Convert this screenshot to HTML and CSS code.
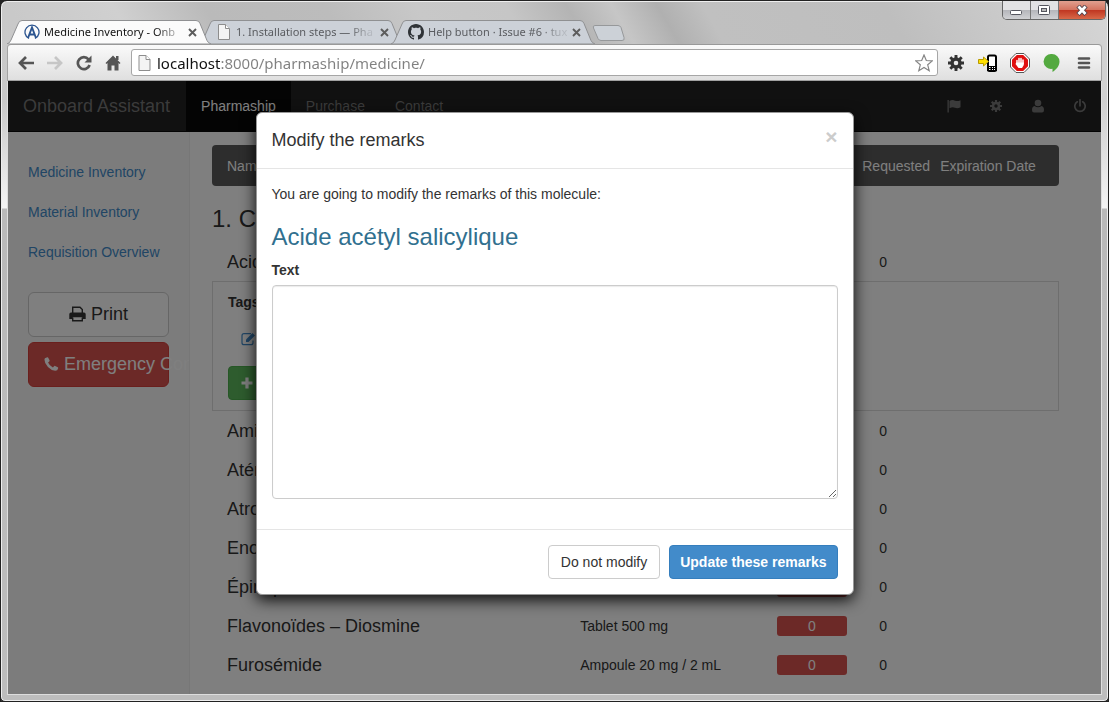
FILE: index.html
```html
<!DOCTYPE html>
<html lang="en">
<head>
<meta charset="utf-8">
<title>Medicine Inventory - Onboard Assistant</title>
<link rel="stylesheet" href="styles.css">
</head>
<body>
<svg class="sprite" aria-hidden="true">
  <symbol id="gear" viewBox="0 0 16 16">
    <circle cx="8" cy="8" r="4" fill="none" stroke="currentColor" stroke-width="3.4"/>
    <path stroke="currentColor" stroke-width="2.9" d="M8 0v3M8 13v3M0 8h3M13 8h3M2.3 2.3l2.2 2.2M11.5 11.5l2.2 2.2M13.7 2.3l-2.2 2.2M4.5 11.5l-2.2 2.2"/>
  </symbol>
  <symbol id="sheet" viewBox="0 0 13 16">
    <path d="M1 .5h7l4 4v11H1z" fill="#f4f4f4" stroke="#8d8d8d"/><path d="M8 .5v4h4" fill="#fff" stroke="#8d8d8d"/>
  </symbol>
  <symbol id="tab-shape" viewBox="0 0 204 24" preserveAspectRatio="none">
    <path d="M0 24q3-1 4-4l7-16q1-3.500 4-3.500h174q3 0 4 3l7 17q1 2.500 4 3.500z" fill="currentColor" stroke="#8f9092" vector-effect="non-scaling-stroke"/>
  </symbol>
  <symbol id="cross" viewBox="0 0 9 9"><path d="M1 1l7 7M8 1l-7 7" stroke="currentColor" stroke-width="1.9"/></symbol>
</svg>

<div class="window">
  <header class="titlebar">
    <div class="tabs">
      <div class="tab active">
        <svg class="tab-bg"><use href="#tab-shape"/></svg>
        <svg class="favicon" viewBox="0 0 16 16"><path d="M5 14.500A7 7 0 1 1 11 14.500" fill="none" stroke="#2c5590" stroke-width="1.300"/><path d="M4 14L8 3.500l4 10.500M5.500 10.500h5" fill="none" stroke="#2c5590" stroke-width="1.900"/></svg>
        <span class="tab-title">Medicine Inventory - Onb</span>
        <button class="tab-close" aria-label="Close tab"><svg><use href="#cross"/></svg></button>
      </div>
      <div class="tab">
        <svg class="tab-bg"><use href="#tab-shape"/></svg>
        <svg class="favicon"><use href="#sheet"/></svg>
        <span class="tab-title">1. Installation steps — Pha</span>
        <button class="tab-close" aria-label="Close tab"><svg><use href="#cross"/></svg></button>
      </div>
      <div class="tab">
        <svg class="tab-bg"><use href="#tab-shape"/></svg>
        <svg class="favicon" viewBox="0 0 16 16"><path fill="#2f3337" d="M8 0C3.580 0 0 3.580 0 8c0 3.540 2.290 6.530 5.470 7.590.4.070.55-.17.55-.38 0-.19-.01-.82-.01-1.490-2.010.37-2.530-.49-2.690-.94-.09-.23-.48-.94-.82-1.130-.28-.15-.68-.52-.01-.53.63-.01 1.080.58 1.230.82.72 1.210 1.870.87 2.330.66.07-.52.28-.87.51-1.070-1.780-.2-3.640-.89-3.640-3.950 0-.87.31-1.590.82-2.150-.08-.2-.36-1.020.08-2.120 0 0 .67-.21 2.200.82.64-.18 1.320-.27 2-.27s1.360.09 2 .27c1.530-1.040 2.200-.82 2.200-.82.44 1.100.16 1.920.08 2.120.51.56.82 1.270.82 2.150 0 3.070-1.870 3.750-3.650 3.950.29.25.54.73.54 1.480 0 1.070-.01 1.930-.01 2.200 0 .21.15.46.55.38A8 8 0 0 0 16 8c0-4.420-3.580-8-8-8z"/></svg>
        <span class="tab-title">Help button · Issue #6 · tux</span>
        <button class="tab-close" aria-label="Close tab"><svg><use href="#cross"/></svg></button>
      </div>
      <button class="new-tab" aria-label="New tab"><svg viewBox="0 0 33 16"><path d="M3 .5h23q2 0 3 2l3 10q1 3-2 3H9q-2 0-3-2L1.500 3q-1-2.500 1.500-2.500z" fill="#ccd1d7" stroke="#96989a"/></svg></button>
    </div>
    <div class="controls">
      <button aria-label="Minimize"><svg width="13" height="11"><rect x=".5" y="5.500" width="11" height="4" rx="1" fill="#fff" stroke="#55565f"/></svg></button>
      <button aria-label="Maximize"><svg width="13" height="11"><rect x=".5" y=".5" width="11" height="9" rx="1" fill="#fff" stroke="#55565f"/><rect x="3.500" y="3.500" width="5" height="3" fill="#bbb" stroke="#55565f"/></svg></button>
      <button class="quit" aria-label="Close window"><svg width="13" height="11"><path d="M2 1l8 8.500M10 1l-8 8.500" stroke="#54444c" stroke-width="4.600"/><path d="M2.500 1.500l7 7.500M9.500 1.500l-7 7.500" stroke="#fff" stroke-width="2.700"/></svg></button>
    </div>
  </header>

  <div class="toolbar">
    <nav class="nav-buttons" aria-label="Browser">
      <button aria-label="Back"><svg viewBox="0 0 16 16"><path d="M8 2L2 8l6 6M2.500 8H16" fill="none" stroke="#555" stroke-width="2.700"/></svg></button>
      <button aria-label="Forward"><svg viewBox="0 0 16 16"><path d="M8 2l6 6-6 6M13.500 8H0" fill="none" stroke="#c6c6c6" stroke-width="2.700"/></svg></button>
      <button aria-label="Reload"><svg viewBox="0 0 16 16"><path d="M12.500 4.300A6 6 0 1 0 13.600 10" fill="none" stroke="#555" stroke-width="2.700"/><path d="M15.500 .5v7h-7z" fill="#555"/></svg></button>
      <button aria-label="Home"><svg viewBox="0 0 16 16"><path d="M8 .5l7.500 7.500-1 1L13.500 8v7.500H9.500v-5h-3v5h-4V8l-1 1-1-1z M11 1h2.500v4H11z" fill="#555"/></svg></button>
    </nav>
    <div class="omnibox">
      <svg class="sheet"><use href="#sheet"/></svg>
      <input class="url" type="text" aria-label="Address" value="localhost:8000/pharmaship/medicine/">
      <button aria-label="Bookmark"><svg class="star" viewBox="0 0 18 18"><path d="M9 1l2.300 5.500 6 .4-4.600 3.900 1.500 5.900L9 13.500l-5.200 3.200 1.500-5.900L.7 6.900l6-.4z" fill="#fff" stroke="#858585" stroke-width="1.200"/></svg></button>
    </div>
    <div class="extensions">
      <button aria-label="Settings"><svg viewBox="0 0 18 18" color="#333"><use href="#gear" x="1" y="1" width="16" height="16"/></svg></button>
      <button aria-label="Send to phone"><svg class="wide" viewBox="0 0 20 18"><rect x="10" y="1.500" width="8" height="15.500" rx="1.500" fill="#fff" stroke="#000" stroke-width="2"/><path d="M9 12h10v5H9z"/><path d="M11 13.500h1.500M14 13.500h1M16 13.500h1M11 15.500h1.500M14 15.500h1M16 15.500h1" stroke="#fff"/><path d="M.5 5.500h5v-2.500l5 4.500-5 4.500V9.500h-5z" fill="#ffe000" stroke="#b79a00"/></svg></button>
      <button aria-label="Ad blocker"><svg class="wide" viewBox="0 0 20 20"><path d="M6 .5h8L19.500 6v8L14 19.500H6L.5 14V6z" fill="#fff" stroke="#555"/><path d="M6.800 2h6.400L18 6.800v6.400L13.200 18H6.800L2 13.200V6.800z" fill="#e01010"/><path d="M7 10.500V7.500M9 10V5.500M11 10V5.500M13 10.500V7" stroke="#fff" stroke-width="1.500" stroke-linecap="round"/><path d="M6.300 9.500h7.500v2.500l-1.800 3H8.500l-3-4z" fill="#fff"/></svg></button>
      <button aria-label="Hangouts"><svg viewBox="0 0 18 20"><path d="M9 1a7.500 7.500 0 0 1 7.500 7.500c0 5-4 8.500-7 10.500v-3.200A7.500 7.500 0 1 1 9 1z" fill="#53a93f"/></svg></button>
      <button aria-label="Menu"><svg viewBox="0 0 18 18"><path d="M4 4.500h10M4 9h10M4 13.500h10" stroke="#555" stroke-width="2.600" stroke-linecap="round"/></svg></button>
    </div>
  </div>

  <div class="page">
    <nav class="navbar">
      <a class="brand" href="#">Onboard Assistant</a>
      <a class="link current" href="#">Pharmaship</a>
      <a class="link" href="#">Purchase</a>
      <a class="link" href="#">Contact</a>
      <div class="nav-icons">
        <a href="#" aria-label="Flag"><svg viewBox="0 0 14 14"><path d="M.5 1h1.300v12.500H.5z"/><path d="M2.500 2q3-1.800 5.500-.3 2.500 1 5.500-.5v7q-3 1.600-5.500.5-2.500-1.200-5.500.5z"/></svg></a>
        <a href="#" aria-label="Settings"><svg viewBox="0 0 14 14"><use href="#gear" x="1" y="1" width="12" height="12"/></svg></a>
        <a href="#" aria-label="User"><svg viewBox="0 0 14 14"><circle cx="7" cy="4" r="3.300"/><path d="M3.500 7q3.500 2.500 7 0Q13 7.500 13 11q0 2.500-2 2.500H3Q1 13.500 1 11 1 7.500 3.500 7z"/></svg></a>
        <a href="#" aria-label="Log out"><svg viewBox="0 0 14 14"><path d="M4.300 2.800a5.200 5.200 0 1 0 5.400 0M7 .8v6" fill="none" stroke="currentColor" stroke-width="1.700" stroke-linecap="round"/></svg></a>
      </div>
    </nav>

    <div class="columns">
      <aside class="sidebar">
        <a href="#">Medicine Inventory</a>
        <a href="#">Material Inventory</a>
        <a href="#">Requisition Overview</a>
        <button class="big print"><svg viewBox="0 0 17 16"><path d="M3.700 7V1.200h7.300l2.300 2.300V7M3.700 11.500v3.300h9.600v-3.300" fill="none" stroke="currentColor" stroke-width="1.400"/><path d="M2 6.500h13q1.700 0 1.700 1.800V13h-3.400v-1.800H3.700V13H.3V8.300Q.3 6.500 2 6.500z" fill="currentColor"/></svg> Print</button>
        <button class="big emergency"><svg viewBox="0 0 16 16"><path d="M1 1.800L3.500.8q.7-.2 1 .5l1.400 2.800q.3.700-.3 1.200L4.300 6.500q1.500 3.500 5.200 5.200l1.200-1.400q.5-.6 1.200-.3l2.800 1.500q.6.400.4 1.100-.5 2.700-3.200 2.700Q8 15 4.200 11.200.5 7.500.5 3.500q0-1 .5-1.700z" fill="currentColor"/></svg> Emergency Contacts</button>
      </aside>

      <main class="content">
        <table class="inventory">
          <colgroup><col class="c-name"><col class="c-pack"><col class="c-qty"><col class="c-req"><col></colgroup>
          <thead><tr><th>Name</th><th></th><th></th><th>Requested</th><th>Expiration Date</th></tr></thead>
          <tbody>
            <tr><th class="group" colspan="5">1. Cardiologie</th></tr>
            <tr><td class="name">Acide acétyl salicylique</td><td></td><td></td><td class="req">0</td><td></td></tr>
            <tr><td class="details" colspan="5">
              <div class="panel">
                <strong>Tags</strong>
                <a href="#" aria-label="Edit the remarks"><svg viewBox="0 0 15 14"><path d="M10 1.700H3Q1 1.700 1 3.700v7Q1 12.700 3 12.700h7q2 0 2-2V8.500" fill="none" stroke="currentColor" stroke-width="1.200"/><path d="M5 10V7.500L11.500 1 14 3.500 7.500 10z" fill="currentColor"/></svg></a>
                <button class="add" aria-label="Add"><svg viewBox="0 0 12 12"><path d="M6 .5v11M.5 6h11" stroke="currentColor" stroke-width="3.200"/></svg></button>
              </div>
            </td></tr>
            <tr><td class="name">Amiodarone</td><td></td><td></td><td class="req">0</td><td></td></tr>
            <tr><td class="name">Aténolol</td><td></td><td></td><td class="req">0</td><td></td></tr>
            <tr><td class="name">Atropine</td><td></td><td></td><td class="req">0</td><td></td></tr>
            <tr><td class="name">Enoxaparine</td><td></td><td></td><td class="req">0</td><td></td></tr>
            <tr><td class="name">Épinéphrine</td><td></td><td><span class="badge">0</span></td><td class="req">0</td><td></td></tr>
            <tr><td class="name">Flavonoïdes – Diosmine</td><td>Tablet 500 mg</td><td><span class="badge">0</span></td><td class="req">0</td><td></td></tr>
            <tr><td class="name">Furosémide</td><td>Ampoule 20 mg / 2 mL</td><td><span class="badge">0</span></td><td class="req">0</td><td></td></tr>
          </tbody>
        </table>
      </main>
    </div>

    <div class="backdrop">
      <form class="modal" role="dialog" aria-labelledby="modal-title">
        <div class="modal-header">
          <h4 id="modal-title">Modify the remarks</h4>
          <button type="button" class="dismiss" aria-label="Close">×</button>
        </div>
        <div class="modal-body">
          <p>You are going to modify the remarks of this molecule:</p>
          <h3>Acide acétyl salicylique</h3>
          <label for="remarks">Text</label>
          <textarea id="remarks" rows="10"></textarea>
        </div>
        <div class="modal-footer">
          <button type="button" class="btn">Do not modify</button>
          <button type="button" class="btn primary">Update these remarks</button>
        </div>
      </form>
    </div>
  </div>
</div>
</body>
</html>
```
FILE: styles.css
```css
* { box-sizing: border-box; }

body {
  margin: 0;
  background: #222;
  color: #333;
  font: 14px/20px "Liberation Sans", Arial, sans-serif;
}

button {
  padding: 0;
  border: 0;
  background: none;
  color: inherit;
  font: inherit;
}

a { color: #428bca; text-decoration: none; }
svg { flex: none; }
.sprite { position: absolute; width: 0; height: 0; }

/* Window frame */
.window {
  display: flex;
  flex-direction: column;
  min-height: 100vh;
  padding: 0 6px 6px;
  border: 1px solid #222;
  border-radius: 7px 7px 5px 5px;
  box-shadow: inset 0 0 0 1px #eee;
  background:
    linear-gradient(#bebebe00 0, #bebebe00 100px, #f4f4f4 207px, #b9b9b9 208px, #bdbdbd 100%) no-repeat 0 0 / 100% 100%,
    linear-gradient(60deg, #c4c4c4 0, #c9c9c9 27%, #d0d0d0 34%, #bababa 40%, #bcbcbc 48%, #c8c8c8 54%, #c6c6c6 60%, #b4b4b4 64%, #c6c6c6 67%, #b0b0b0 70%, #c0c0c0 73%, #bebebe 85%, #d6d6d6 100%);
}

.titlebar {
  display: flex;
  align-items: flex-end;
  justify-content: space-between;
  height: 43px;
}

.tabs { display: flex; align-items: flex-end; font: 11px/16px "Noto Sans", "Open Sans", sans-serif; }

.tab {
  position: relative;
  isolation: isolate;
  display: flex;
  align-items: center;
  width: 204px;
  height: 24px;
  padding: 0 14px 0 17px;
  color: #5a5c60;
}
.tab + .tab { margin-left: -12px; }
.tab.active { z-index: 1; color: #111; }
.tab-bg { position: absolute; left: 0; top: 0; z-index: -1; width: 100%; height: 100%; color: #ccd1d8; }
.active .tab-bg { color: #fbfbfb; }
.favicon { width: 16px; height: 16px; }
.tab-title {
  flex: 1;
  margin: 0 4px;
  white-space: nowrap;
  mask-image: linear-gradient(90deg, #000 80%, #0003 96%);
}
.tab-close { display: flex; color: #5c5c5c; }
.tab-close svg { width: 9px; height: 9px; }
.new-tab svg { display: block; width: 33px; height: 16px; margin: 0 0 3px -3px; }

.controls {
  display: flex;
  align-self: flex-start;
  margin-right: -4px;
  overflow: hidden;
  border: 1px solid #666;
  border-top: 0;
  border-radius: 0 0 5px 5px;
}
.controls button {
  display: grid;
  place-items: center;
  width: 28px;
  height: 18px;
  background: linear-gradient(#e2e2e4 48%, #b4b5ba 50%, #d0d1d4);
  border-right: 1px solid #777;
}
.controls .quit { width: 46px; border: 0; background: linear-gradient(#e0a090, #d47460 48%, #bf3520 50%, #d86848); }

/* Browser toolbar */
.toolbar {
  display: flex;
  align-items: center;
  height: 37px;
  padding: 0 1px 0 3px;
  border: 1px solid #a2a2a2;
  border-top-color: #999;
  border-radius: 4px 4px 0 0;
  background: linear-gradient(#fafafa, #dfdfdf);
}
.nav-buttons, .extensions { display: flex; }
.nav-buttons button, .extensions button { display: grid; place-items: center; width: 29px; }
.nav-buttons svg { width: 16px; height: 16px; }
.extensions { margin-left: 2px; }
.extensions button { width: 32px; }
.extensions svg { width: 18px; height: 20px; }
.extensions .wide { width: 20px; }

.omnibox {
  display: flex;
  flex: 1;
  align-items: center;
  height: 27px;
  margin-left: 4px;
  padding: 0 4px 0 6px;
  border: 1px solid #a6a6a6;
  border-radius: 3px;
  background: #fff;
}
.sheet { width: 13px; height: 16px; }
.url {
  flex: 1;
  min-width: 0;
  padding: 0;
  margin-left: 6px;
  border: 0;
  outline: 0;
  font: 15px/22px "Noto Sans", "Open Sans", sans-serif;
  color: transparent;
  background: linear-gradient(90deg, #111 64px, #808080 64px);
  background-clip: text;
}
.star { display: block; width: 18px; height: 18px; }

/* Page */
.page {
  position: relative;
  display: flex;
  flex: 1;
  flex-direction: column;
  overflow: hidden;
  border: 1px solid #ddd;
  border-top: 0;
  background: #fff;
}

.navbar {
  display: flex;
  height: 51px;
  border-bottom: 1px solid #080808;
  background: #222;
}
.navbar a { padding: 15px; color: #777; }
.navbar .brand { padding-right: 16px; font-size: 18px; }
.navbar .current { background: #080808; color: #fff; }
.nav-icons { display: flex; margin-left: auto; }
.nav-icons a { width: 42px; padding: 18px 14px; }
.nav-icons svg { display: block; width: 14px; height: 14px; fill: currentColor; }

.columns { display: flex; flex: 1; }

.sidebar {
  display: flex;
  flex: none;
  flex-direction: column;
  width: 182px;
  padding: 20px;
  overflow: hidden;
  border-right: 1px solid #eee;
  background: #f8f8f8;
}
.sidebar a { line-height: 40px; }
.big {
  height: 45px;
  padding-bottom: 2px;
  border: 1px solid #ccc;
  border-radius: 6px;
  font-size: 18px;
  line-height: 24px;
  white-space: nowrap;
}
.big svg { width: 17px; height: 16px; vertical-align: -2px; }
.print { margin: 20px 0 5px; background: #fff; }
.emergency { padding-left: 15px; border-color: #d43f3a; background: #d9534f; color: #fff; text-align: left; }
.emergency svg { width: 15px; }

.content { flex: 1; padding: 13px 42px 0 22px; }

.inventory { width: 100%; table-layout: fixed; border-spacing: 0; }
.c-name { width: 41.700%; }
.c-pack { width: 23.200%; }
.c-qty { width: 10.100%; }
.c-req { width: 9.200%; }
.inventory th { font-weight: normal; text-align: left; white-space: nowrap; }
.inventory td { height: 39px; padding: 0 0 0 15px; white-space: nowrap; }
.inventory thead th { height: 41px; padding: 0 0 0 15px; background: #5a5a5a; color: #fff; }
.inventory thead th:first-child { border-radius: 4px 0 0 4px; }
.inventory thead th:last-child { border-radius: 0 4px 4px 0; }
.inventory .group { height: 56px; padding: 10px 0 0; font-size: 24px; line-height: 26px; }
.inventory .name { font-size: 18px; }
.inventory .req { padding-left: 32px; }
.inventory .details { padding: 0; }
.panel {
  display: flex;
  flex-direction: column;
  align-items: flex-start;
  gap: 18px;
  height: 130px;
  padding: 10px 15px;
  border: 1px solid #ddd;
}
.panel a { padding: 0 13px; }
.panel a svg { display: block; width: 15px; height: 18px; }
.add {
  display: grid;
  place-items: center;
  width: 38px;
  height: 34px;
  border: 1px solid #4cae4c;
  border-radius: 4px;
  background: #5cb85c;
  color: #fff;
}
.add svg { width: 12px; height: 12px; }
.badge {
  display: block;
  border-radius: 3px;
  background: #d9534f;
  color: #fff;
  text-align: center;
}

/* Dialog */
.backdrop {
  position: absolute;
  inset: 0;
  padding: 31px 10px 0;
  background: rgba(0, 0, 0, .5);
}
.modal {
  max-width: 598px;
  margin: 0 auto;
  border: 1px solid #999;
  border-radius: 6px;
  background: #fff;
  box-shadow: 0 5px 15px rgba(0, 0, 0, .9);
}
.modal-header {
  display: flex;
  justify-content: space-between;
  padding: 15px;
  border-bottom: 1px solid #e5e5e5;
}
.modal-header h4 { margin: 0; font-size: 18px; font-weight: normal; line-height: 25px; }
.dismiss { align-self: flex-start; color: #ccc; font-size: 21px; font-weight: bold; line-height: 18px; }
.modal-body { padding: 15px; }
.modal-body p { margin: 0 0 20px; }
.modal-body h3 { margin: 0 0 10px; color: #31708f; font-size: 24px; font-weight: normal; line-height: 26px; }
.modal-body label { display: block; margin-bottom: 5px; font-weight: bold; }
.modal-body textarea {
  display: block;
  width: 100%;
  margin-bottom: 15px;
  padding: 6px 12px;
  border: 1px solid #ccc;
  border-radius: 4px;
  box-shadow: inset 0 1px 1px rgba(0, 0, 0, .08);
  font: inherit;
  resize: vertical;
}
.modal-footer {
  display: flex;
  justify-content: flex-end;
  gap: 9px;
  padding: 15px;
  border-top: 1px solid #e5e5e5;
}
.btn { padding: 6px 12px; border: 1px solid #ccc; border-radius: 4px; background: #fff; }
.primary { padding: 6px 10px; border-color: #357ebd; background: #428bca; color: #fff; font-weight: bold; }
```
